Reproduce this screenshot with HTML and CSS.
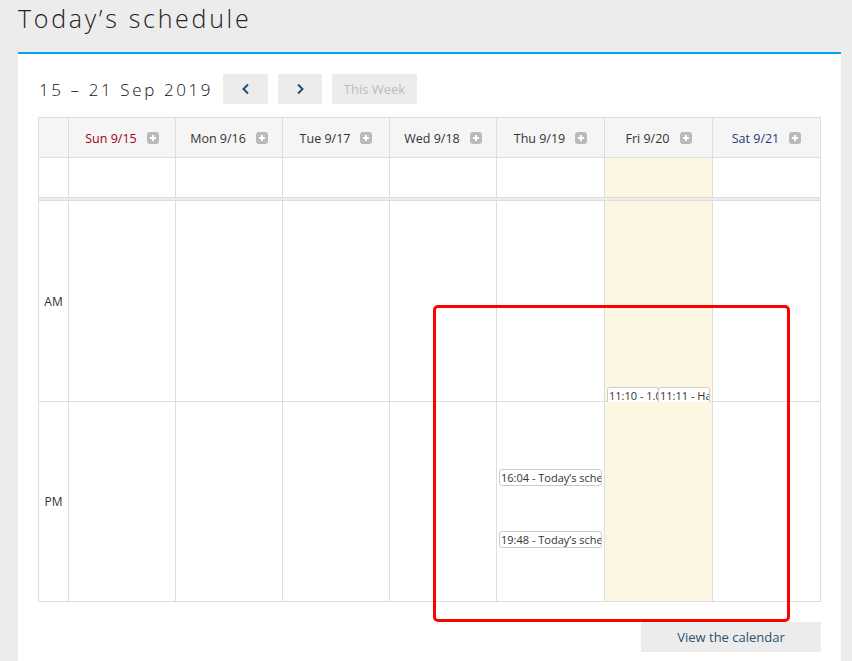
FILE: index.html
```html
<!DOCTYPE html>
<html lang="en">
<head>
<meta charset="utf-8">
<title>Today’s schedule</title>
<link rel="stylesheet" href="styles.css">
</head>
<body>
<h1 class="title">Today’s schedule</h1>
<section class="panel">
  <div class="nav">
    <span class="range">15 – 21 Sep 2019</span>
    <button class="navbtn prev" aria-label="Previous week"><svg width="10" height="12" viewBox="0 0 10 12"><polyline points="7,1.5 2.5,6 7,10.5" fill="none" stroke="#1f4f7a" stroke-width="2"/></svg></button>
    <button class="navbtn" aria-label="Next week"><svg width="10" height="12" viewBox="0 0 10 12"><polyline points="3,1.5 7.5,6 3,10.5" fill="none" stroke="#1f4f7a" stroke-width="2"/></svg></button>
    <button class="weekbtn">This Week</button>
  </div>

  <div class="cal">
    <div class="grid head">
      <div class="cell"></div>
      <div class="cell day sun">Sun 9/15 <span class="plus"></span></div>
      <div class="cell day">Mon 9/16 <span class="plus"></span></div>
      <div class="cell day">Tue 9/17 <span class="plus"></span></div>
      <div class="cell day">Wed 9/18 <span class="plus"></span></div>
      <div class="cell day">Thu 9/19 <span class="plus"></span></div>
      <div class="cell day">Fri 9/20 <span class="plus"></span></div>
      <div class="cell day sat">Sat 9/21 <span class="plus"></span></div>
    </div>
    <div class="grid allday">
      <div class="cell"></div>
      <div class="cell"></div>
      <div class="cell"></div>
      <div class="cell"></div>
      <div class="cell"></div>
      <div class="cell"></div>
      <div class="cell today"></div>
      <div class="cell"></div>
    </div>
    <div class="sep"></div>
    <div class="grid timed">
      <div class="cell label">AM</div>
      <div class="cell"></div>
      <div class="cell"></div>
      <div class="cell"></div>
      <div class="cell"></div>
      <div class="cell"></div>
      <div class="cell today">
        <div class="evrow" style="top: 93.06%">
          <div class="ev">11:10 - 1.0 hour meeting</div>
          <div class="ev">11:11 - Handover</div>
        </div>
      </div>
      <div class="cell"></div>

      <div class="cell label">PM</div>
      <div class="cell"></div>
      <div class="cell"></div>
      <div class="cell"></div>
      <div class="cell"></div>
      <div class="cell">
        <div class="evrow" style="top: 33.6%"><div class="ev">16:04 - Today’s schedule</div></div>
        <div class="evrow" style="top: 64.8%"><div class="ev">19:48 - Today’s schedule</div></div>
      </div>
      <div class="cell today"></div>
      <div class="cell"></div>
    </div>
  </div>

  <div class="foot">
    <button class="viewbtn">View the calendar</button>
  </div>
</section>
<div class="annot"></div>
</body>
</html>
```

FILE: styles.css
```css
* { box-sizing: border-box; }

html, body {
  margin: 0;
  padding: 0;
  background: #ececec;
  font-family: "Open Sans", "Noto Sans", sans-serif;
  color: #333;
}

body {
  position: relative;
  width: 852px;
  height: 661px;
  overflow: hidden;
}

.title {
  margin: 0;
  height: 52px;
  padding: 1px 0 0 18px;
  font-size: 25px;
  font-weight: 300;
  letter-spacing: 2.7px;
  line-height: 34px;
  color: #222;
}

.panel {
  margin-left: 18px;
  width: 823px;
  height: 609px;
  background: #fff;
  border-top: 2px solid #03a5ea;
  padding: 20px 0 0 20px;
}

.nav {
  display: flex;
  align-items: center;
  height: 30px;
  gap: 10px;
}

.range {
  font-size: 17px;
  font-weight: 300;
  letter-spacing: 2.6px;
  color: #111;
  margin-left: 1px;
  width: 174px;
  white-space: nowrap;
}

button {
  font-family: inherit;
  border: 0;
  padding: 0;
  cursor: pointer;
}

.navbtn {
  width: 44px;
  height: 30px;
  background: #ececec;
  display: flex;
  align-items: center;
  justify-content: center;
}

.navbtn.prev {
  width: 45px;
}

.weekbtn {
  width: 85px;
  height: 30px;
  background: #ececec;
  color: #bdbdbd;
  font-size: 13px;
}

.cal {
  margin-top: 13px;
  width: 783px;
  border: 1px solid #ddd;
}

.grid {
  display: grid;
  grid-template-columns: 29px 106px 106px 106px 106px 107px 107px 107px;
  column-gap: 1px;
  background: #ddd;
}

.cell {
  background: #fff;
  position: relative;
}

.head {
  height: 40px;
  border-bottom: 1px solid #ddd;
}

.head .cell {
  background: #f5f5f5;
}

.day {
  display: flex;
  align-items: center;
  justify-content: center;
  gap: 10px;
  padding-top: 1px;
  font-size: 12.5px;
  color: #333;
}

.day.sun { color: #a0001a; }
.day.sat { color: #27397a; }

.plus {
  width: 12px;
  height: 12px;
  border-radius: 3px;
  background: #bababa;
  position: relative;
  flex: none;
}

.plus::before,
.plus::after {
  content: "";
  position: absolute;
  background: #fff;
}

.plus::before {
  left: 3px;
  top: 5px;
  width: 6px;
  height: 2px;
}

.plus::after {
  left: 5px;
  top: 3px;
  width: 2px;
  height: 6px;
}

.allday {
  height: 39px;
}

.today {
  background: #fcf6e3;
}

.sep {
  height: 4px;
  border-top: 1px solid #ddd;
  border-bottom: 1px solid #ddd;
  background: #ececec;
}

.timed {
  grid-template-rows: 200px 199px;
  row-gap: 1px;
}

.label {
  display: flex;
  align-items: center;
  justify-content: center;
  font-size: 12px;
  color: #333;
}

.evrow {
  position: absolute;
  left: 2px;
  right: 2px;
  display: flex;
}

.ev {
  flex: 1 1 0;
  min-width: 0;
  height: 17px;
  background: #fff;
  border: 1px solid #ccc;
  border-radius: 3px;
  font-size: 11px;
  line-height: 15px;
  padding: 0 1px;
  white-space: nowrap;
  overflow: hidden;
  color: #333;
}

.ev + .ev {
  margin-left: -1px;
}

.foot {
  display: flex;
  justify-content: flex-end;
  width: 783px;
  margin-top: 20px;
}

.viewbtn {
  width: 180px;
  height: 30px;
  background: #ececec;
  color: #2b5270;
  font-size: 13px;
}

.annot {
  position: absolute;
  left: 433px;
  top: 305px;
  width: 357px;
  height: 317px;
  border: 3px solid #ff0000;
  border-radius: 5px;
  pointer-events: none;
}
```
